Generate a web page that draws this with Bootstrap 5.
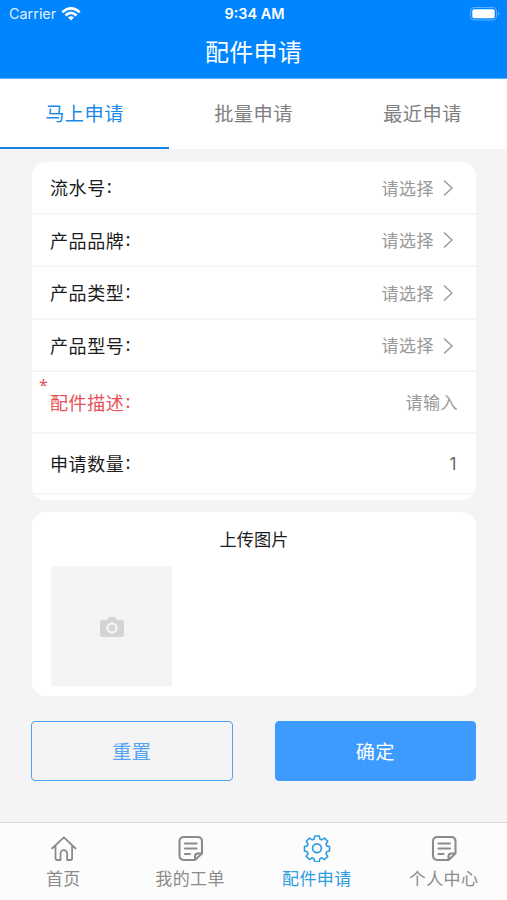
<!DOCTYPE html>
<html lang="zh-CN">
<head>
<meta charset="utf-8">
<meta name="viewport" content="width=device-width, initial-scale=1">
<title>配件申请</title>
<link rel="stylesheet" href="https://cdn.jsdelivr.net/npm/bootstrap@5.3.0/dist/css/bootstrap.min.css">
<style>
body{background:#f4f4f4;font-family:"Noto Sans CJK SC",sans-serif;color:#1c1c1c}
.screen{height:900px;overflow:hidden}
.topbar{background:#0085ff;height:79px;border-bottom:1px solid #5cb3ff}
.status{height:28px;font:15px/28px Inter,sans-serif;padding:0 7px 0 9px}
.status .side{flex:1 1 0}
.status .carrier{font-size:14.4px;opacity:.88}
.status .clock{font-weight:600;font-size:14.4px}
.title{font-size:24px;line-height:46px;letter-spacing:.3px;font-weight:400}
.tabs{height:70px;font-size:19.2px;letter-spacing:.5px}
.tabs a{color:#808080;line-height:68px;border-bottom:2px solid transparent;height:70px}
.tabs a.active{color:#1e88e8;border-color:#1583e6}
.panel{border-radius:14px;margin:0 31px 0 32px}
.form-panel{margin-top:13px;height:338px;overflow:hidden}
.form-line{height:52.6px;padding:1px 19px 0 18px;border-bottom:2px solid #f6f6f6;font-size:18px;letter-spacing:.6px}
.form-line.tall{height:61.3px}
.form-line .colon{font-family:"Noto Sans CJK SC",sans-serif;font-size:18px;margin-left:1px;line-height:1;display:inline-block;vertical-align:2px}
.form-line .value{font-size:17px;letter-spacing:.5px;color:#999;padding-bottom:1px}
.form-line .value svg{margin:1px 3px 0 8px}
.form-line .qty{font:17px Inter,sans-serif;color:#666}
.form-line.tall .value{margin-right:-1px}
.required{color:#e64e55}
.star{left:7px;top:1px;font:16px/24px "Noto Sans",sans-serif}
.upload{margin-top:12px;height:184px;padding:14px 19px 0}
.upload h2{font-size:17.2px;line-height:26px;letter-spacing:.1px;font-weight:400}
.photo{width:121px;height:120px;margin-top:14px;background:#f2f4f6}
.photo svg{margin-top:2px}
.actions{margin:25px 31px 0;gap:42px}
.actions .btn{flex:1 1 0;height:60px;border-radius:4px;font-size:19.2px;letter-spacing:.3px;padding:0}
.btn-reset{color:#55a4f4;border:1px solid #4fa2f4}
.btn-ok{background:#3d9bff;border-color:#3d9bff;color:#fff}
.tabbar{height:78px;background:#fcfcfc;border-top:1px solid #d8d8d8;font-size:17px;letter-spacing:.4px;line-height:24px}
.tabbar a{color:#8b8b8b;flex:1 1 0;padding-top:11px}
.tabbar a.active{color:#2b9ce0}
.tabbar svg{display:block;margin-bottom:4px}
</style>
<script src="https://cdn.jsdelivr.net/npm/bootstrap@5.3.0/dist/js/bootstrap.bundle.min.js"></script>
</head>
<body>
<div class="screen d-flex flex-column">
  <header class="topbar text-white flex-shrink-0">
    <div class="status d-flex align-items-center">
      <div class="side d-flex align-items-center"><span class="carrier">Carrier</span>
        <svg class="ms-1" width="22" height="16" viewBox="0 0 22 16" fill="none" stroke="#fff" stroke-width="2.7"><path d="M2.3 6.2Q11-1.6 19.7 6.2M5.5 9.4Q11 4.4 16.5 9.4"/><path d="M11 14.4 8 11.5Q11 9 14 11.5Z" fill="#fff" stroke="none"/></svg>
      </div>
      <span class="clock">9:34 AM</span>
      <div class="side d-flex justify-content-end">
        <svg width="30" height="14" viewBox="0 0 30 14"><rect x=".5" y=".5" width="26" height="12.5" rx="3.5" fill="none" stroke="#5cb0ff"/><rect x="2.3" y="2.3" width="22.4" height="9" rx="1.8" fill="#fff"/><path d="M28 4.7q2.5 2 0 4z" fill="#5cb0ff"/></svg>
      </div>
    </div>
    <h1 class="title text-center m-0">配件申请</h1>
  </header>
  <nav class="tabs d-flex bg-white text-center flex-shrink-0">
    <a class="active col-4 text-decoration-none" href="#">马上申请</a>
    <a class="col-4 text-decoration-none" href="#">批量申请</a>
    <a class="col-4 text-decoration-none" href="#">最近申请</a>
  </nav>
  <main class="flex-grow-1">
    <section class="panel form-panel bg-white">
      <div class="form-line d-flex align-items-center justify-content-between"><span>流水号<span class="colon">:</span></span><span class="value d-flex align-items-center">请选择<svg width="12" height="18" viewBox="0 0 12 18" fill="none" stroke="#999" stroke-width="1.4"><path d="M2 1.5 10 9 2 16.5"/></svg></span></div>
      <div class="form-line d-flex align-items-center justify-content-between"><span>产品品牌<span class="colon">:</span></span><span class="value d-flex align-items-center">请选择<svg width="12" height="18" viewBox="0 0 12 18" fill="none" stroke="#999" stroke-width="1.4"><path d="M2 1.5 10 9 2 16.5"/></svg></span></div>
      <div class="form-line d-flex align-items-center justify-content-between"><span>产品类型<span class="colon">:</span></span><span class="value d-flex align-items-center">请选择<svg width="12" height="18" viewBox="0 0 12 18" fill="none" stroke="#999" stroke-width="1.4"><path d="M2 1.5 10 9 2 16.5"/></svg></span></div>
      <div class="form-line d-flex align-items-center justify-content-between"><span>产品型号<span class="colon">:</span></span><span class="value d-flex align-items-center">请选择<svg width="12" height="18" viewBox="0 0 12 18" fill="none" stroke="#999" stroke-width="1.4"><path d="M2 1.5 10 9 2 16.5"/></svg></span></div>
      <div class="form-line tall position-relative d-flex align-items-center justify-content-between"><span class="star required position-absolute">*</span><span class="required">配件描述<span class="colon">:</span></span><span class="value">请输入</span></div>
      <div class="form-line tall d-flex align-items-center justify-content-between"><span>申请数量<span class="colon">:</span></span><span class="qty">1</span></div>
    </section>
    <section class="panel upload bg-white">
      <h2 class="text-center m-0">上传图片</h2>
      <div class="photo d-flex align-items-center justify-content-center">
        <svg width="24" height="20" viewBox="0 0 24 20"><path d="M2.5 3H6Q7 3 7.600 2 8.500 0 10 0h4q1.500 0 2.400 2 .6 1 1.600 1h3.500Q24 3 24 5.500v12Q24 20 21.500 20h-19Q0 20 0 17.500v-12Q0 3 2.500 3z" fill="#d2d4d6"/><circle cx="12" cy="11" r="4.600" fill="#d2d4d6" stroke="#f6f8f9" stroke-width="2"/></svg>
      </div>
    </section>
    <div class="actions d-flex">
      <button class="btn btn-reset" type="button">重置</button>
      <button class="btn btn-ok" type="button">确定</button>
    </div>
  </main>
  <nav class="tabbar d-flex flex-shrink-0 text-center">
    <a class="d-flex flex-column align-items-center text-decoration-none" href="#">
      <svg width="28" height="28" viewBox="0 0 28 28" fill="none" stroke="currentColor" stroke-width="1.8" stroke-linejoin="round" stroke-linecap="round"><path d="M3 14.500 14.900 3.400 26.500 14.500M6.500 12v12.300q0 1.700 1.700 1.700h3.300v-6.500a3.300 3.300 0 0 1 6.600 0V26h3.300q1.700 0 1.700-1.700V12"/></svg>
      首页</a>
    <a class="d-flex flex-column align-items-center text-decoration-none" href="#">
      <svg width="28" height="28" viewBox="0 0 28 28" fill="none" stroke="currentColor" stroke-width="2.1" stroke-linejoin="round" stroke-linecap="round"><path d="M19 26H8Q3.500 26 3.500 21.500v-14Q3.500 3 8 3h13.500Q26 3 26 7.500v12L19 26v-3.500q0-3 3-3h4M9 9.500h11.500M9 14.500h11.500M9 20h5"/></svg>
      我的工单</a>
    <a class="active d-flex flex-column align-items-center text-decoration-none" href="#">
      <svg width="28" height="28" viewBox="0 0 28 28" fill="none" stroke="currentColor" stroke-width="1.700" stroke-linejoin="round"><path d="M11.600 1h4.800l.8 3.400 2 .9 3-1.900 3.400 3.400-1.900 3 .9 2 3 .8v4.800l-3 .8-.9 2 1.900 3-3.400 3.400-3-1.900-2 .9-.8 3.400h-4.800l-.8-3.400-2-.9-3 1.900-3.400-3.400 1.900-3-.9-2-3-.8v-4.800l3-.8.9-2-1.900-3 3.400-3.400 3 1.900 2-.9z" transform="translate(1.080 1) scale(.923)"/><circle cx="14" cy="14.200" r="4.400"/></svg>
      配件申请</a>
    <a class="d-flex flex-column align-items-center text-decoration-none" href="#">
      <svg width="28" height="28" viewBox="0 0 28 28" fill="none" stroke="currentColor" stroke-width="2.1" stroke-linejoin="round" stroke-linecap="round"><path d="M18.500 26H7.500Q3 26 3 21.500v-14Q3 3 7.500 3H21Q25.500 3 25.500 7.500v12L18.500 26v-3.500q0-3 3-3h4M8.500 9.500H20M8.500 14.500H20M8.500 20h5"/></svg>
      个人中心</a>
  </nav>
</div>
</body>
</html>
